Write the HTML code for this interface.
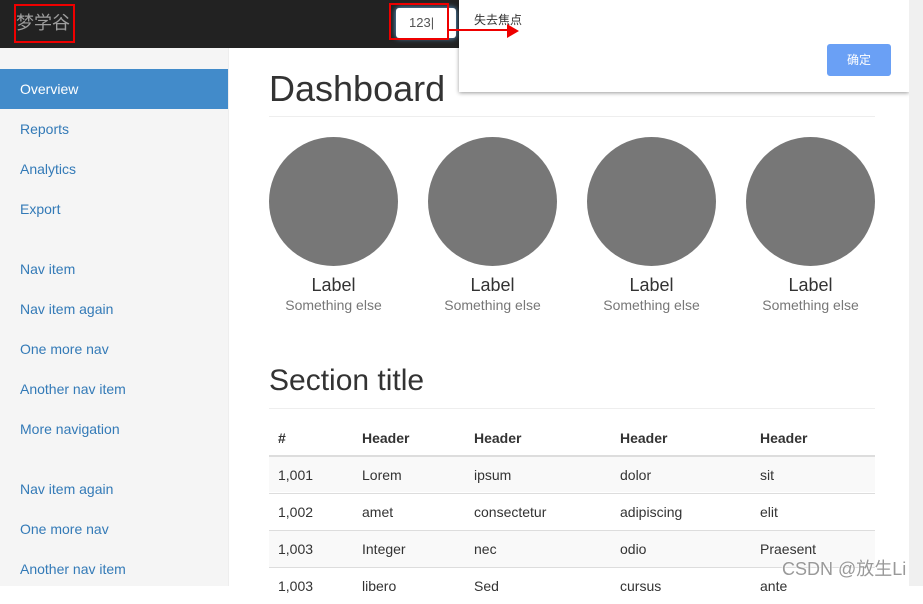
<!DOCTYPE html>
<html><head><meta charset="utf-8"><style>
*{margin:0;padding:0;box-sizing:border-box}
body{width:923px;height:586px;overflow:hidden;background:#fff;font-family:"Liberation Sans","Noto Sans CJK SC",sans-serif;font-size:14px;color:#333;position:relative}
.nav{position:absolute;left:0;top:0;width:923px;height:48px;background:#222}
.brand{position:absolute;left:14px;top:4px;width:61px;height:39px;border:2px solid #e00;color:#9d9d9d;font-size:18px;line-height:35px;padding-left:0}
.inp{position:absolute;left:396px;top:8px;width:60px;height:30px;background:#fff;border-radius:3px;box-shadow:0 0 6px #66afe9;font-size:13px;color:#555;line-height:30px;padding-left:13px}
.inpbox{position:absolute;left:389px;top:3px;width:60px;height:37px;border:2px solid #e00}
.side{position:absolute;left:0;top:48px;width:229px;height:538px;background:#f5f5f5;border-right:1px solid #eee}
.side a{position:absolute;left:20px;color:#337ab7;font-size:14px}
.active{position:absolute;left:0;top:21px;width:228px;height:40px;background:#428bca}
.main h1{position:absolute;left:269px;font-size:36px;font-weight:400;color:#333}
.hr{position:absolute;left:269px;width:606px;height:1px;background:#eee}
.c{position:absolute;top:137px;width:129px;height:129px;border-radius:50%;background:#777}
.lbl{position:absolute;top:275px;width:129px;text-align:center;font-size:18px;color:#333}
.sub{position:absolute;top:297px;width:129px;text-align:center;font-size:14px;color:#777}
.row{position:absolute;left:269px;width:606px;height:37px;border-top:1px solid #ddd}
.t{position:absolute;font-size:14px}
.dlg{position:absolute;left:459px;top:0;width:450px;height:92px;background:#fff;box-shadow:0 1px 4px rgba(0,0,0,.4)}
.btn{position:absolute;left:368px;top:44px;width:64px;height:32px;background:#6aa0f5;border-radius:3px;color:#fff;font-size:12px;text-align:center;line-height:32px}
.sb{position:absolute;left:909px;top:0;width:14px;height:586px;background:#f0f0f0}
</style></head><body>
<div class="nav"></div>
<div class="brand">梦学谷</div>
<div class="inp">123|</div>
<div class="inpbox"></div>
<div class="side">
<div class="active"></div>
<a style="top:33px;color:#fff">Overview</a>
<a style="top:73px">Reports</a>
<a style="top:113px">Analytics</a>
<a style="top:153px">Export</a>
<a style="top:213px">Nav item</a>
<a style="top:253px">Nav item again</a>
<a style="top:293px">One more nav</a>
<a style="top:333px">Another nav item</a>
<a style="top:373px">More navigation</a>
<a style="top:433px">Nav item again</a>
<a style="top:473px">One more nav</a>
<a style="top:513px">Another nav item</a>
</div>
<div class="main">
<h1 style="top:68px">Dashboard</h1>
<div class="hr" style="top:116px"></div>
<div class="c" style="left:269px"></div><div class="c" style="left:428px"></div><div class="c" style="left:587px"></div><div class="c" style="left:746px"></div>
<div class="lbl" style="left:269px">Label</div><div class="lbl" style="left:428px">Label</div><div class="lbl" style="left:587px">Label</div><div class="lbl" style="left:746px">Label</div>
<div class="sub" style="left:269px">Something else</div><div class="sub" style="left:428px">Something else</div><div class="sub" style="left:587px">Something else</div><div class="sub" style="left:746px">Something else</div>
<h1 style="top:364px;font-size:30px">Section title</h1>
<div class="hr" style="top:408px"></div>
<div class="row" style="top:455px;border-top:2px solid #ddd;background:#f9f9f9"></div>
<div class="row" style="top:493px"></div>
<div class="row" style="top:530px;background:#f9f9f9"></div>
<div class="row" style="top:567px"></div>
<div class="t" style="top:430px;left:278px;font-weight:bold">#</div>
<div class="t" style="top:430px;left:362px;font-weight:bold">Header</div>
<div class="t" style="top:430px;left:474px;font-weight:bold">Header</div>
<div class="t" style="top:430px;left:620px;font-weight:bold">Header</div>
<div class="t" style="top:430px;left:760px;font-weight:bold">Header</div>
<div class="t" style="top:467px;left:278px">1,001</div><div class="t" style="top:467px;left:362px">Lorem</div><div class="t" style="top:467px;left:474px">ipsum</div><div class="t" style="top:467px;left:620px">dolor</div><div class="t" style="top:467px;left:760px">sit</div>
<div class="t" style="top:504px;left:278px">1,002</div><div class="t" style="top:504px;left:362px">amet</div><div class="t" style="top:504px;left:474px">consectetur</div><div class="t" style="top:504px;left:620px">adipiscing</div><div class="t" style="top:504px;left:760px">elit</div>
<div class="t" style="top:541px;left:278px">1,003</div><div class="t" style="top:541px;left:362px">Integer</div><div class="t" style="top:541px;left:474px">nec</div><div class="t" style="top:541px;left:620px">odio</div><div class="t" style="top:541px;left:760px">Praesent</div>
<div class="t" style="top:578px;left:278px">1,003</div><div class="t" style="top:578px;left:362px">libero</div><div class="t" style="top:578px;left:474px">Sed</div><div class="t" style="top:578px;left:620px">cursus</div><div class="t" style="top:578px;left:760px">ante</div>
</div>
<div class="dlg"><div style="position:absolute;left:15px;top:11px;font-size:12px;color:#333">失去焦点</div><div class="btn">确定</div></div>
<svg style="position:absolute;left:447px;top:22px" width="75" height="18"><line x1="0" y1="8" x2="62" y2="8" stroke="#e00" stroke-width="2"/><polygon points="60,2 72,9 60,16" fill="#e00"/></svg>
<div class="sb"></div>
<div style="position:absolute;left:782px;top:555px;font-size:18px;color:#999;text-shadow:0 0 2px #fff,0 0 2px #fff">CSDN @放生Li</div>
</body></html>
